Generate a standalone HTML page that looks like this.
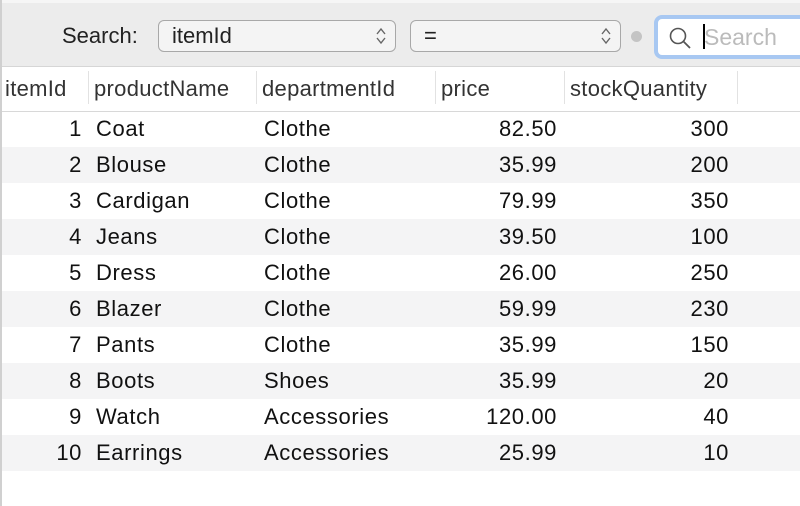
<!DOCTYPE html>
<html><head><style>
*{margin:0;padding:0;box-sizing:border-box}
body{width:800px;height:506px;overflow:hidden;background:#fff;font-family:"Liberation Sans",sans-serif;position:relative}
.lb{position:absolute;left:0;top:0;width:2px;height:506px;background:#d0d0d0}
.top{position:absolute;left:2px;top:0;width:798px;height:67px;background:#ececec;border-top:3px solid #f6f6f6;border-bottom:1px solid #d6d6d6}
.lbl{position:absolute;left:60px;top:20px;font-size:22px;color:#222}
.pop{position:absolute;top:17px;height:32px;border:1px solid #a8a8a8;border-radius:6px;background:#f4f4f4;font-size:22px;padding-left:13px;line-height:30px;color:#222}
.arr{position:absolute;right:8px;top:5px}
.dot{position:absolute;left:629px;top:28px;width:11px;height:11px;border-radius:50%;background:#c4c4c4}
.srch{position:absolute;left:652px;top:12px;width:160px;height:44px;border:4px solid #a8c8f2;border-radius:8px;background:#fff}
.srch span{position:absolute;left:46px;top:5px;font-size:23px;color:#bbb}
.cur{position:absolute;left:45px;top:5px;width:2px;height:25px;background:#000}
.hdr{position:absolute;left:2px;top:67px;width:798px;height:45px;border-bottom:1px solid #d8d8d8;background:#fff}
.h{position:absolute;top:9px;font-size:22px;letter-spacing:0.3px;color:#333}
.sep{position:absolute;top:4px;width:1px;height:33px;background:#e2e2e2}
.row{position:absolute;left:2px;width:798px;height:36px;font-size:22px;letter-spacing:0.6px;color:#111;line-height:36px}
.row.g{background:#f4f4f5}
.c{position:absolute;top:0}
</style></head><body>
<div class="top">
<div class="lbl">Search:</div>
<div class="pop" style="left:156px;width:238px">itemId<svg class="arr" width="12" height="20" viewBox="0 0 12 20"><path d="M2 8 L6 3 L10 8 M2 12 L6 17 L10 12" fill="none" stroke="#666" stroke-width="1.4"/></svg></div>
<div class="pop" style="left:408px;width:211px">=<svg class="arr" width="12" height="20" viewBox="0 0 12 20"><path d="M2 8 L6 3 L10 8 M2 12 L6 17 L10 12" fill="none" stroke="#666" stroke-width="1.4"/></svg></div>
<div class="dot"></div>
<div class="srch"><svg style="position:absolute;left:10px;top:7px" width="24" height="24" viewBox="0 0 24 24"><circle cx="10" cy="10" r="7.5" fill="none" stroke="#555" stroke-width="1.6"/><line x1="15.5" y1="15.5" x2="22" y2="22" stroke="#555" stroke-width="1.8"/></svg><div class="cur"></div><span>Search</span></div>
</div>
<div class="hdr">
<div class="h" style="left:3px">itemId</div><div class="sep" style="left:86px"></div>
<div class="h" style="left:92px">productName</div><div class="sep" style="left:254px"></div>
<div class="h" style="left:260px">departmentId</div><div class="sep" style="left:433px"></div>
<div class="h" style="left:439px">price</div><div class="sep" style="left:562px"></div>
<div class="h" style="left:568px">stockQuantity</div><div class="sep" style="left:735px"></div>
</div>
<div id="rows"></div>
<script>
var d=[[1,"Coat","Clothe","82.50",300],[2,"Blouse","Clothe","35.99",200],[3,"Cardigan","Clothe","79.99",350],[4,"Jeans","Clothe","39.50",100],[5,"Dress","Clothe","26.00",250],[6,"Blazer","Clothe","59.99",230],[7,"Pants","Clothe","35.99",150],[8,"Boots","Shoes","35.99",20],[9,"Watch","Accessories","120.00",40],[10,"Earrings","Accessories","25.99",10]];
var h="";d.forEach(function(r,i){h+='<div class="row'+(i%2?' g':'')+'" style="top:'+(111+36*i)+'px"><div class="c" style="right:718px">'+r[0]+'</div><div class="c" style="left:94px">'+r[1]+'</div><div class="c" style="left:262px">'+r[2]+'</div><div class="c" style="right:243px">'+r[3]+'</div><div class="c" style="right:71px">'+r[4]+'</div></div>'});
document.getElementById("rows").innerHTML=h;
</script>
<div class="lb"></div>
</body></html>
